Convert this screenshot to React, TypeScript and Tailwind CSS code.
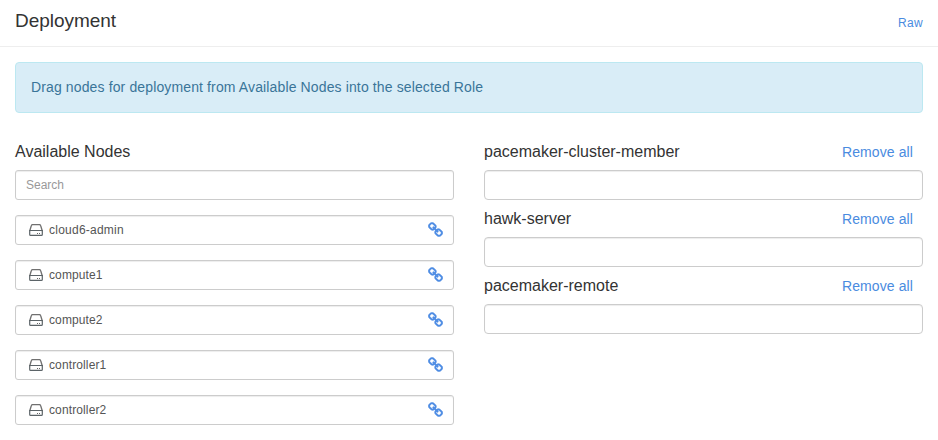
const nodes = [
  { name: "cloud6-admin", tracking: "tracking-[0.24px]" },
  { name: "compute1", tracking: "tracking-[0.12px]" },
  { name: "compute2", tracking: "tracking-[0.12px]" },
  { name: "controller1", tracking: "tracking-[0.12px]" },
  { name: "controller2", tracking: "tracking-[0.12px]" },
];
const roles = ["pacemaker-cluster-member", "hawk-server", "pacemaker-remote"];

function DiskIcon() {
  return (
    <svg viewBox="0 0 14 12" className="h-3 w-3.5 shrink-0" fill="none">
      <path d="M.7 7 2.300 1.700Q2.600.6 3.700.6h6.600q1.100 0 1.400 1.100L13.300 7" stroke="#707070" strokeWidth="1.300" />
      <path d="M.7 6.500v4q0 .9.9.9h10.800q.9 0 .9-.9v-4Z" stroke="#5c6468" strokeWidth="1.200" />
      <path d="M8 9.500h1M10 9.500h1" stroke="#666" />
    </svg>
  );
}

function LinkIcon() {
  return (
    <svg viewBox="0 0 1664 1664" className="mb-px h-[15px] w-[15px] shrink-0" fill="#4f8de4" stroke="#4f8de4" strokeWidth="36">
      <path d="M1456 1216q0-40-28-68l-208-208q-28-28-68-28-42 0-72 32 3 3 19 18.500t21.500 21.500 15 19 13 25.500 3.500 27.500q0 40-28 68t-68 28q-15 0-27.500-3.500t-25.500-13-19-15-21.500-21.500-18.500-19q-33 31-33 73 0 40 28 68l206 207q27 27 68 27 40 0 68-26l147-146q28-28 28-67zm-703-705q0-40-28-68l-206-207q-28-28-68-28-39 0-68 27l-147 146q-28 28-28 67 0 40 28 68l208 208q27 27 68 27 42 0 72-31-3-3-19-18.500t-21.500-21.500-15-19-13-25.500-3.500-27.500q0-40 28-68t68-28q15 0 27.500 3.500t25.500 13 19 15 21.500 21.500 18.500 19q33-31 33-73zm895 705q0 120-85 203l-147 146q-83 83-203 83-121 0-204-85l-206-207q-83-83-83-203 0-123 88-209l-88-88q-86 88-208 88-120 0-204-84l-208-208q-84-84-84-204t85-203l147-146q83-83 203-83 121 0 204 85l206 207q83 83 83 203 0 123-88 209l88 88q86-88 208-88 120 0 204 84l208 208q84 84 84 204z" />
    </svg>
  );
}

export default function App() {
  return (
    <div className="h-[440px] overflow-hidden bg-white font-['Liberation_Sans',Arial,sans-serif] text-[#333]">
      <header className="flex h-[47px] items-center justify-between border-b border-[#eee] px-[15px] pb-[5px]">
        <h1 className="text-[19px] leading-5 tracking-[-0.04px]">Deployment</h1>
        <a className="mt-1 text-xs tracking-[0.3px] text-[#4a8be0]">Raw</a>
      </header>
      <div className="mx-[15px] mt-[15px] flex h-[51px] items-center rounded border border-[#bce8f1] bg-[#d9edf7] px-[15px] pb-0.5 text-sm tracking-[0.128px] text-[#3a7599]">
        Drag nodes for deployment from Available Nodes into the selected Role
      </div>
      <main className="mx-[15px] mt-[29px] grid grid-cols-2 gap-[30px]">
        <section>
          <h2 className="h-[28px] text-base leading-5">Available Nodes</h2>
          <input
            placeholder="Search"
            className="block h-[30px] w-full rounded-[3px] border border-[#ccc] px-2.5 text-xs shadow-[inset_0_1px_1px_rgba(0,0,0,0.075)] placeholder:text-[#999]"
          />
          <ul className="mt-[15px] flex flex-col gap-[15px]">
            {nodes.map(({ name, tracking }) => (
              <li key={name} className="flex h-[30px] items-center rounded-[3px] border border-[#ccc] pr-[10px] pl-[13px] text-xs text-[#555] shadow-[inset_0_1px_1px_rgba(0,0,0,0.075)]">
                <DiskIcon />
                <span className={`ml-1.5 flex-1 ${tracking}`}>{name}</span>
                <LinkIcon />
              </li>
            ))}
          </ul>
        </section>
        <section>
          {roles.map((role) => (
            <div key={role} className="h-[67px]">
              <div className="flex h-[28px] justify-between pr-[10px]">
                <h2 className="text-base leading-5">{role}</h2>
                <a className="text-sm leading-5 tracking-[0.1px] text-[#4a8be0]">Remove all</a>
              </div>
              <div className="h-[30px] rounded border border-[#ccc] shadow-[inset_0_1px_1px_rgba(0,0,0,0.075)]" />
            </div>
          ))}
        </section>
      </main>
    </div>
  );
}
